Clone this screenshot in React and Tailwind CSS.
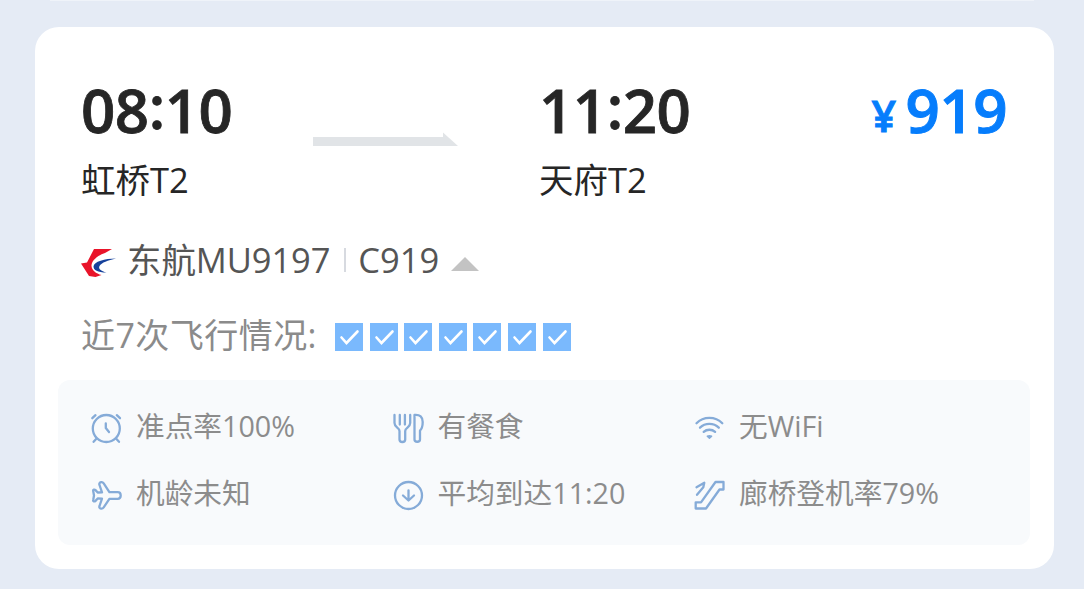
const flights = [1, 2, 3, 4, 5, 6, 7];

function Icon({ children }) {
  return (
    <svg
      className="size-8 shrink-0 text-[#85abd8]"
      viewBox="0 0 32 32"
      fill="none"
      stroke="currentColor"
      strokeWidth="2.3"
      strokeLinecap="round"
      strokeLinejoin="round"
    >
      {children}
    </svg>
  );
}

function AlarmIcon() {
  return (
    <Icon>
      <circle cx="16.3" cy="16.5" r="13.5" />
      <path d="M15.8 11.5v4.500l3.2 4M2.3 6.2l3.2-3M30 6.2l-3.2-3M6.6 26.5l-3 3.3M26 26.5l3 3.3" />
    </Icon>
  );
}

function MealIcon() {
  return (
    <Icon>
      <path d="M2.500 3v8c0 4.500 5 4.500 5 8v8.500c0 3.300 5.700 3.300 5.700 0V19c0-3.500 5-3.500 5-8V3M7.800 3v9.500M12.900 3v9.500" />
      <path d="M22.500 3c5.500-.500 8.200 2 8.200 7 0 4.500-.500 6.500-2.700 8.500v9c0 3-5.500 3-5.500 0z" />
    </Icon>
  );
}

function WifiIcon() {
  return (
    <Icon>
      <path d="M3.500 11.300c7-7.200 18.800-7.200 25.800 0M7 15.700c5.200-5 13.600-5 18.800 0M10.700 19.900c3.200-2.900 8.200-2.900 11.400 0" />
      <path d="M14.300 24.200c1.400-.700 2.900-.700 4.300 0l-2.150 2z" fill="currentColor" strokeWidth="1.500" />
    </Icon>
  );
}

function PlaneIcon() {
  return (
    <Icon>
      <path d="M11.200 3.200c-1.800.400-2.200 1.500-1.700 2.800l2.500 7.300-4.300.200-2.200-2.400c-1-1-2.600-.500-2.300.900l.8 4.500-.8 4.500c-.300 1.400 1.300 1.900 2.300.900l2.200-2.400 4.300.200-2.500 7.300c-.5 1.300.1 2.400 1.500 2.600 1.200.200 2-.300 2.700-1.300l5.700-8.500h8.300c4 0 4-6.600 0-6.600h-8.300L13.700 4.400c-.7-1-1.500-1.400-2.500-1.200z" />
    </Icon>
  );
}

function ArrivalIcon() {
  return (
    <Icon>
      <circle cx="16.500" cy="16.500" r="13.500" />
      <path d="M16.500 11.300v10M11 16.500l5.500 5 5.500-5" />
    </Icon>
  );
}

function BridgeIcon() {
  return (
    <Icon>
      <path d="M22.500 3h8v7.500h-4L13 29.500H2.700v-6.200H8z" />
      <path d="M3.500 8.200l7.800-4.400-1 4.500-6.300 7.500" />
    </Icon>
  );
}

const facts = [
  { icon: AlarmIcon, text: "准点率100%" },
  { icon: MealIcon, text: "有餐食" },
  { icon: WifiIcon, text: "无WiFi" },
  { icon: PlaneIcon, text: "机龄未知" },
  { icon: ArrivalIcon, text: "平均到达11:20" },
  { icon: BridgeIcon, text: "廊桥登机率79%" },
];

function Stop({ hour, minute, place }) {
  return (
    <div className="w-[232px] text-[#262626]">
      <div className="flex h-[60px] items-center text-[60px] leading-[60px] font-semibold tracking-[-0.5px] [-webkit-text-stroke:0.8px_#262626]">
        <span>{hour}</span>
        <span className="mb-2 w-[16px] text-center">:</span>
        <span>{minute}</span>
      </div>
      <div className="mt-5 h-10 text-[34.500px] leading-10">{place}</div>
    </div>
  );
}

export default function App() {
  return (
    <div className="flex h-[589px] w-[1084px] flex-col bg-[#e5ebf5] font-['Open_Sans','Noto_Sans_CJK_SC',sans-serif] whitespace-nowrap">
      <div className="mx-[50px] h-px bg-[#eff3f9]" />
      <main className="mt-[26px] ml-[35px] flex h-[542px] w-[1019px] flex-col rounded-[24px] bg-white pt-[53px]">
        <section className="flex h-[120px] pr-[47px] pl-[46px]">
          <Stop hour="08" minute="10" place="虹桥T2" />
          <svg className="mt-[52px] h-[14px] w-[145px]" viewBox="0 0 145 14">
            <path d="M0 5h130V0.500L145 14H0z" fill="#e1e4e7" />
          </svg>
          <div className="ml-[81px]">
            <Stop hour="11" minute="20" place="天府T2" />
          </div>
          <div className="ml-auto flex h-[60px] items-center text-[60px] leading-[60px] font-semibold tracking-[-0.5px] text-[#067dfc] [-webkit-text-stroke:1px_#067dfc]">
            <span className="mt-3 mr-[10px] text-[43px] leading-[48px]">¥</span>
            <span>919</span>
          </div>
        </section>

        <section className="mt-10 flex h-10 items-center pl-[46px] text-[34.500px] leading-10 text-[#555]">
          <svg className="mt-[5px] mr-[11px] h-[30px] w-[35px]" viewBox="0 0 35 30">
            <path d="M13 1h18l-7 4C17 7.500 11.500 11.500 10.500 17c-.3 5 4.500 8.500 10 10l-6 2-6.500-1L0 15.500l6-1z" fill="#e9142a" />
            <path d="M35 10.500C24 10.500 12.500 13.500 12.500 18.500c0 3.500 4 6 13 6-5.500-1.500-8.500-3.500-7-6.500C20.500 14.500 27 12.500 35 10.500z" fill="#16419b" />
          </svg>
          <span className="tracking-[-0.1px]">东航MU9197</span>
          <span className="mr-3 ml-[14px] h-6 w-[2px] bg-[#d7dae0]" />
          <span>C919</span>
          <svg className="mt-[7px] ml-3 h-[14px] w-7" viewBox="0 0 28 14">
            <path d="M14 0l14 14H0z" fill="#c3c3c3" />
          </svg>
        </section>

        <section className="mt-[35px] flex h-10 items-center pl-[46px] text-[34px] leading-10 text-[#8b8b8b]">
          <span className="w-[254px] tracking-[0.45px]">近7次飞行情况:</span>
          <div className="mt-[3px] flex gap-[6.600px]">
            {flights.map((n) => (
              <svg key={n} className="size-7" viewBox="0 0 28 28">
                <path d="M0 0h28v28H0z" fill="#7ab9fd" />
                <path d="M6.500 14.500l5 5.500L22.500 8.500" fill="none" stroke="#fff" strokeWidth="2.600" strokeLinecap="round" />
              </svg>
            ))}
          </div>
        </section>

        <section className="mt-[25px] ml-[23px] grid h-[165px] w-[972px] grid-cols-[301.500px_301.500px_1fr] grid-rows-[67px_67px] rounded-[12px] bg-[#f8fafc] pt-[14px] pl-8">
          {facts.map(({ icon: Glyph, text }) => (
            <div key={text} className="flex items-center gap-[14px] text-[28.700px] leading-10 text-[#8c8c8c]">
              <Glyph />
              <span className="mb-[3px]">{text}</span>
            </div>
          ))}
        </section>
      </main>
    </div>
  );
}
